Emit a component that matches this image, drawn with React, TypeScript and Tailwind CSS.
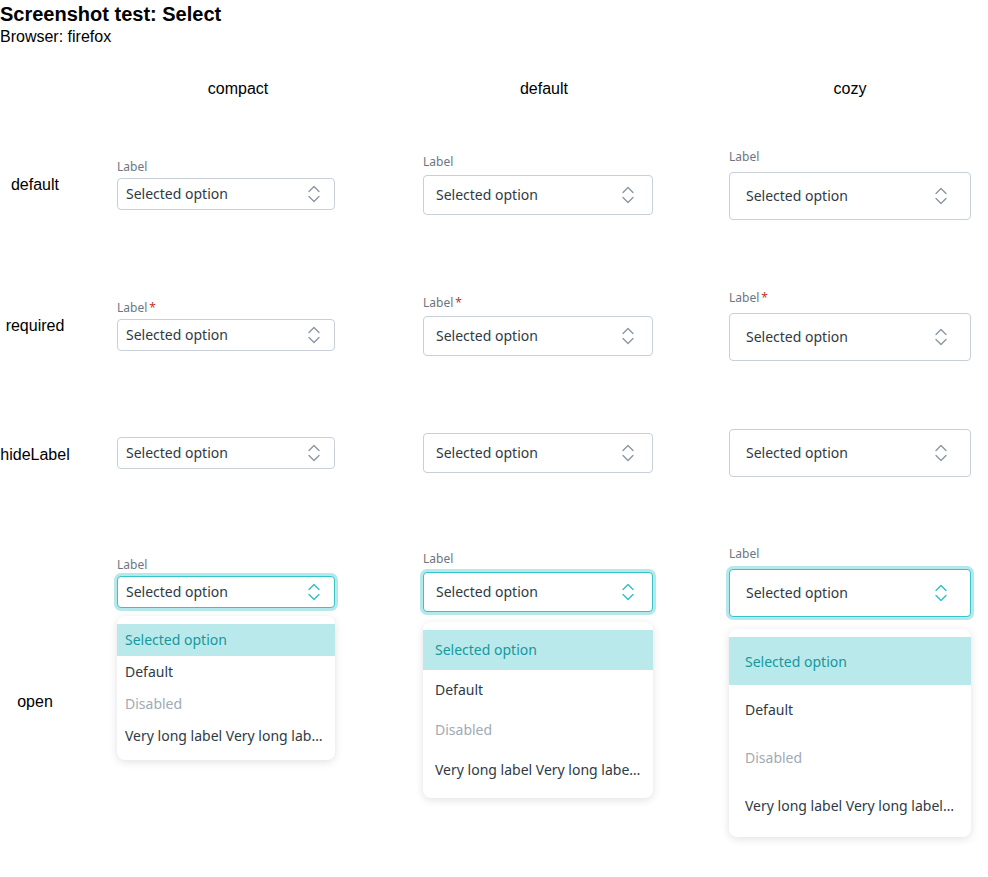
import { useState } from 'react';

type Size = 'compact' | 'default' | 'cozy';

const sizes: Record<Size, { w: string; h: string; pad: string; labelMb: string; item: string; drop: string; reserve: string }> = {
  compact: { w: 'w-[218px]', h: 'h-8', pad: 'pl-2 pr-[14px]', labelMb: 'mb-[3px]', item: 'h-8 px-2', drop: 'top-2', reserve: 'h-[228px]' },
  default: { w: 'w-[230px]', h: 'h-10', pad: 'pl-3 pr-[18px]', labelMb: 'mb-[5px]', item: 'h-10 px-3', drop: 'top-[10px]', reserve: 'h-[230px]' },
  cozy: { w: 'w-[242px]', h: 'h-12', pad: 'pl-4 pr-[23px]', labelMb: 'mb-[7px]', item: 'h-12 px-4', drop: 'top-3', reserve: 'h-[229px]' },
};

const options = [
  { label: 'Selected option', selected: true },
  { label: 'Default' },
  { label: 'Disabled', disabled: true },
  { label: 'Very long label Very long label Very long label' },
];

const Chevrons = ({ open }: { open?: boolean }) => (
  <svg width="12" height="20" viewBox="0 0 12 20" fill="none" className={open ? 'text-[#2bbfc6]' : 'text-[#8a949e]'}>
    <path d="M1 7.5L6 2.5l5 5M1 12.5L6 17.5l5-5" stroke="currentColor" strokeWidth="1.3" strokeLinecap="round" strokeLinejoin="round" />
  </svg>
);

const Select = ({ size, required, hideLabel, open }: { size: Size; required?: boolean; hideLabel?: boolean; open?: boolean }) => {
  const [value] = useState('Selected option');
  const s = sizes[size];
  return (
    <div className={`${s.w} font-['Noto_Sans','Open_Sans',sans-serif]`}>
      {!hideLabel && (
        <div className={`text-[12px] leading-4 text-[#6b7682] ${s.labelMb}`}>
          Label{required && <span className="ml-[2px] text-[#c0392b]">*</span>}
        </div>
      )}
      <div
        className={`flex items-center justify-between rounded bg-white border ${s.h} ${s.pad} ${
          open ? 'border-[#35c4ca] ring-[3px] ring-[#b5e8ea]' : 'border-[#c8cfd6]'
        }`}
      >
        <span className="text-[14px] leading-5 text-[#2f3a45]">{value}</span>
        <Chevrons open={open} />
      </div>
      {open && (
        <div className={`relative ${s.reserve}`}>
          <ul className={`absolute left-0 right-0 ${s.drop} rounded-lg bg-white py-2 shadow-[0_2px_8px_rgba(0,0,0,0.12)]`}>
            {options.map((o) => (
              <li
                key={o.label}
                className={`flex items-center text-[14px] ${s.item} ${
                  o.selected ? 'bg-[#b9e9eb] text-[#17989d]' : o.disabled ? 'text-[#a2aab3]' : 'text-[#2f3a45]'
                }`}
              >
                <span className="truncate">{o.label}</span>
              </li>
            ))}
          </ul>
        </div>
      )}
    </div>
  );
};

const rows = [
  { name: 'default', props: {}, pad: 'pt-[35px] pb-[35px]' },
  { name: 'required', props: { required: true }, pad: 'pt-[35px] pb-[35px]' },
  { name: 'hideLabel', props: { hideLabel: true }, pad: 'pt-[33px] pb-[37px]' },
  { name: 'open', props: { open: true }, pad: 'pt-[32px] pb-[43px]' },
];

const cols: Size[] = ['compact', 'default', 'cozy'];

export default function App() {
  return (
    <div className="h-[877px] w-full overflow-hidden bg-white font-['Liberation_Sans',Arial,sans-serif] text-black">
      <h1 className="text-[20px] leading-[28px] font-bold">Screenshot test: Select</h1>
      <p className="text-[16px] leading-[18px]">Browser: firefox</p>
      <div className="mt-[17px] grid grid-cols-[85px_306px_306px_306px]">
        <div className="h-[51px]" />
        {cols.map((c) => (
          <div key={c} className="flex h-[51px] items-center justify-center text-[16px]">
            {c}
          </div>
        ))}
        {rows.map((r) => (
          <div key={r.name} className="contents">
            <div className="flex w-[70px] items-center justify-center text-[16px]">{r.name}</div>
            {cols.map((c) => (
              <div key={c} className={`flex items-center pl-8 ${r.pad}`}>
                <Select size={c} {...r.props} />
              </div>
            ))}
          </div>
        ))}
      </div>
    </div>
  );
}
